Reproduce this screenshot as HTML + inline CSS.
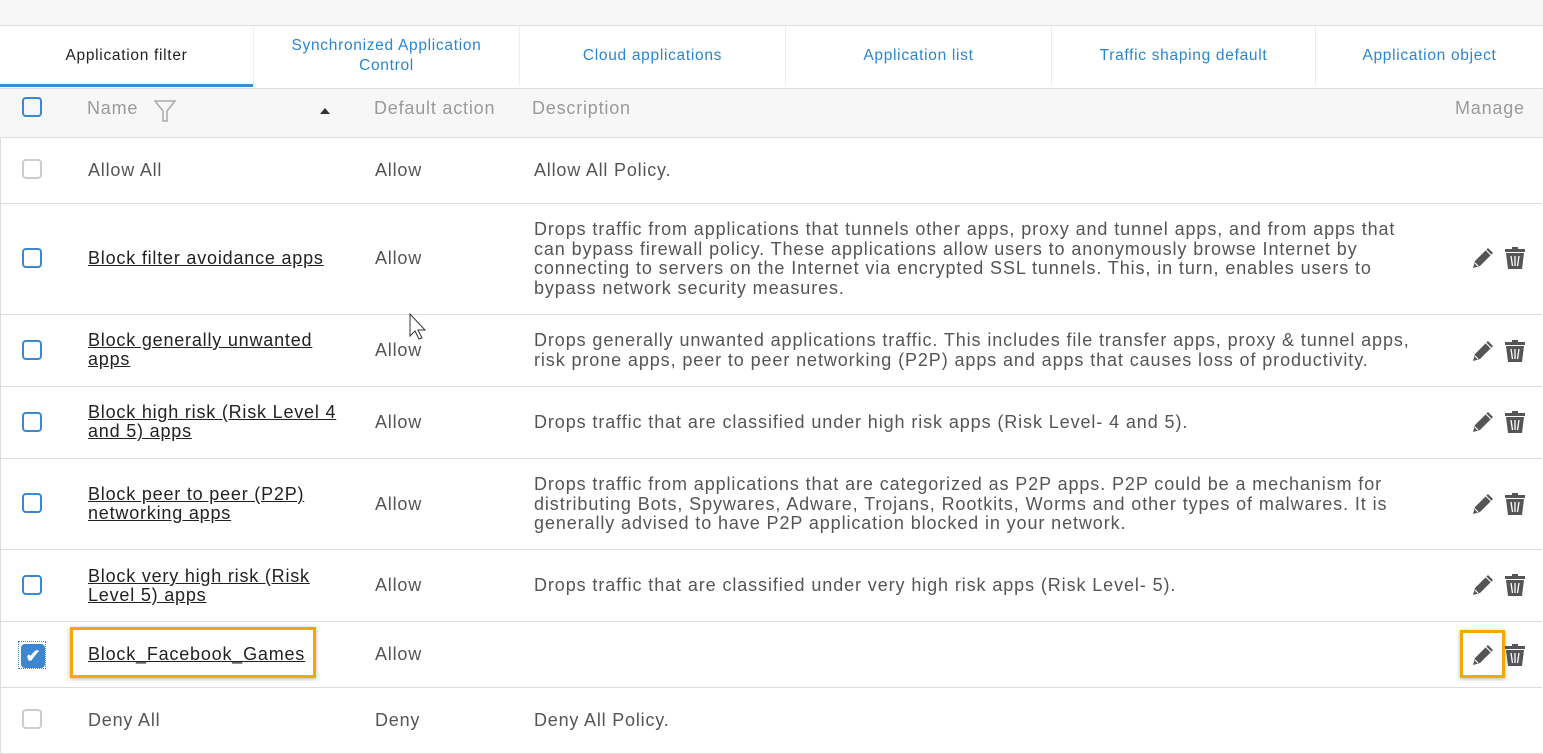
<!DOCTYPE html><html><head><style>
body{margin:0;width:1543px;height:754px;overflow:hidden;background:#fff;font-family:"Liberation Sans",sans-serif;position:relative}
.a{position:absolute}
.top{left:0;top:0;width:1543px;height:25px;background:#f6f6f6;border-bottom:1px solid #ddd}
.tab{top:26px;height:60px;display:flex;align-items:center;justify-content:center;text-align:center;font-size:15.5px;letter-spacing:0.7px;color:#2a86d0;border-right:1px solid #eee;line-height:20px}
.hdr{left:0;top:88px;width:1543px;height:48px;background:#f7f7f7;border-top:1px solid #ddd;border-bottom:1px solid #ddd}
.h{font-size:18px;letter-spacing:0.8px;color:#9a9a9a;top:98px}
.row{left:0;width:1541px;border-bottom:1px solid #ddd;border-left:1px solid #ddd}
.cb{width:20px;height:20px;border:2px solid #3d86d0;border-radius:4px;left:22px;box-sizing:border-box}
.cbg{border-color:#ccc}
.t{font-size:18px;letter-spacing:0.8px;color:#555;line-height:19px}
.n{color:#222;text-decoration:underline;left:88px;width:262px}
.d{left:534px;white-space:nowrap;font-size:18px;letter-spacing:0.9px;line-height:19.5px;color:#555}
</style></head><body>
<div class="a top"></div>
<div class="a tab" style="left:0;width:253px;color:#222">Application filter</div>
<div class="a" style="left:0;top:84px;width:253px;height:3px;background:#3a8ad4"></div>
<div class="a tab" style="left:254px;width:265px">Synchronized Application<br>Control</div>
<div class="a tab" style="left:520px;width:265px">Cloud applications</div>
<div class="a tab" style="left:786px;width:265px">Application list</div>
<div class="a tab" style="left:1052px;width:263px">Traffic shaping default</div>
<div class="a tab" style="left:1316px;width:227px;border:none">Application object</div>
<div class="a hdr"></div>
<div class="a cb" style="top:97px"></div>
<div class="a h" style="left:87px">Name</div>
<svg class="a" style="left:153px;top:99px" width="24" height="24" viewBox="0 0 24 24"><path d="M2 2H22L14 12V22H10V12Z" fill="none" stroke="#aaa" stroke-width="1.5"/></svg>
<div class="a" style="left:320px;top:108px;width:0;height:0;border-left:5px solid transparent;border-right:5px solid transparent;border-bottom:6px solid #333"></div>
<div class="a h" style="left:374px">Default action</div>
<div class="a h" style="left:532px">Description</div>
<div class="a h" style="left:1455px">Manage</div>

<div class="a row" style="top:137px;height:66px"></div>
<div class="a cb cbg" style="top:159px"></div>
<div class="a t" style="left:88px;top:161px">Allow All</div>
<div class="a t" style="left:375px;top:161px">Allow</div>
<div class="a t" style="left:534px;top:161px">Allow All Policy.</div>

<div class="a row" style="top:204px;height:110px"></div>
<div class="a cb" style="top:248px"></div>
<div class="a t n" style="top:249px">Block filter avoidance apps</div>
<div class="a t" style="left:375px;top:249px">Allow</div>
<div class="a d" style="top:220px">Drops traffic from applications that tunnels other apps, proxy and tunnel apps, and from apps that<br>can bypass firewall policy. These applications allow users to anonymously browse Internet by<br>connecting to servers on the Internet via encrypted SSL tunnels. This, in turn, enables users to<br>bypass network security measures.</div>

<div class="a row" style="top:315px;height:71px"></div>
<div class="a cb" style="top:340px"></div>
<div class="a t n" style="top:331px">Block generally unwanted apps</div>
<div class="a t" style="left:375px;top:341px">Allow</div>
<div class="a d" style="top:331px">Drops generally unwanted applications traffic. This includes file transfer apps, proxy &amp; tunnel apps,<br>risk prone apps, peer to peer networking (P2P) apps and apps that causes loss of productivity.</div>

<div class="a row" style="top:387px;height:71px"></div>
<div class="a cb" style="top:412px"></div>
<div class="a t n" style="top:403px">Block high risk (Risk Level 4 and 5) apps</div>
<div class="a t" style="left:375px;top:413px">Allow</div>
<div class="a d" style="top:413px">Drops traffic that are classified under high risk apps (Risk Level- 4 and 5).</div>

<div class="a row" style="top:459px;height:90px"></div>
<div class="a cb" style="top:493px"></div>
<div class="a t n" style="top:485px">Block peer to peer (P2P) networking apps</div>
<div class="a t" style="left:375px;top:495px">Allow</div>
<div class="a d" style="top:475px">Drops traffic from applications that are categorized as P2P apps. P2P could be a mechanism for<br>distributing Bots, Spywares, Adware, Trojans, Rootkits, Worms and other types of malwares. It is<br>generally advised to have P2P application blocked in your network.</div>

<div class="a row" style="top:550px;height:71px"></div>
<div class="a cb" style="top:575px"></div>
<div class="a t n" style="top:567px">Block very high risk (Risk Level 5) apps</div>
<div class="a t" style="left:375px;top:576px">Allow</div>
<div class="a d" style="top:576px">Drops traffic that are classified under very high risk apps (Risk Level- 5).</div>

<div class="a row" style="top:622px;height:65px"></div>
<div class="a" style="left:18px;top:641px;width:28px;height:28px;border:1px dotted #3d86d0;box-sizing:border-box"></div>
<div class="a cb" style="top:644px;left:21px;width:24px;height:24px;background:#3d86d0;border:none;color:#fff;font-size:18px;text-align:center;line-height:24px;font-weight:bold">✔</div>
<div class="a" style="left:70px;top:627px;width:246px;height:51px;border:3px solid #f5a800;box-sizing:border-box;box-shadow:0 1px 4px rgba(0,0,0,.3)"></div>
<div class="a t n" style="top:645px">Block_Facebook_Games</div>
<div class="a t" style="left:375px;top:645px">Allow</div>

<div class="a row" style="top:688px;height:65px"></div>
<div class="a cb cbg" style="top:709px"></div>
<div class="a t" style="left:88px;top:711px">Deny All</div>
<div class="a t" style="left:375px;top:711px">Deny</div>
<div class="a t" style="left:534px;top:711px">Deny All Policy.</div>

<svg width="0" height="0" style="position:absolute"><defs>
<g id="ic"><path d="M0 22L2 15L15 2L20 7L7 20Z" fill="#555"/><path d="M2 17L5 20" stroke="#fff" stroke-width="1.2"/><path d="M13 4L18 9" stroke="#fff" stroke-width="1.2"/>
<path d="M39 1H45V3H52V6H32V3H39Z M33 7H51L49 23H35Z" fill="#555"/><path d="M38 10L39.5 20M42 10V20M46 10L44.5 20" stroke="#fff" stroke-width="1.3"/></g></defs></svg>
<svg class="a" style="left:1473px;top:246px" width="54" height="24"><use href="#ic"/></svg>
<svg class="a" style="left:1473px;top:339px" width="54" height="24"><use href="#ic"/></svg>
<svg class="a" style="left:1473px;top:410px" width="54" height="24"><use href="#ic"/></svg>
<svg class="a" style="left:1473px;top:492px" width="54" height="24"><use href="#ic"/></svg>
<svg class="a" style="left:1473px;top:573px" width="54" height="24"><use href="#ic"/></svg>
<svg class="a" style="left:1473px;top:643px" width="54" height="24"><use href="#ic"/></svg>
<div class="a" style="left:1460px;top:630px;width:45px;height:48px;border:3px solid #f5a800;box-sizing:border-box;box-shadow:0 1px 4px rgba(0,0,0,.3)"></div>
<svg class="a" style="left:408px;top:312px" width="22" height="30"><path d="M2 2V24L7 19L11 27L14 26L10 18H17Z" fill="#fff" stroke="#333" stroke-width="1"/></svg>
</body></html>
